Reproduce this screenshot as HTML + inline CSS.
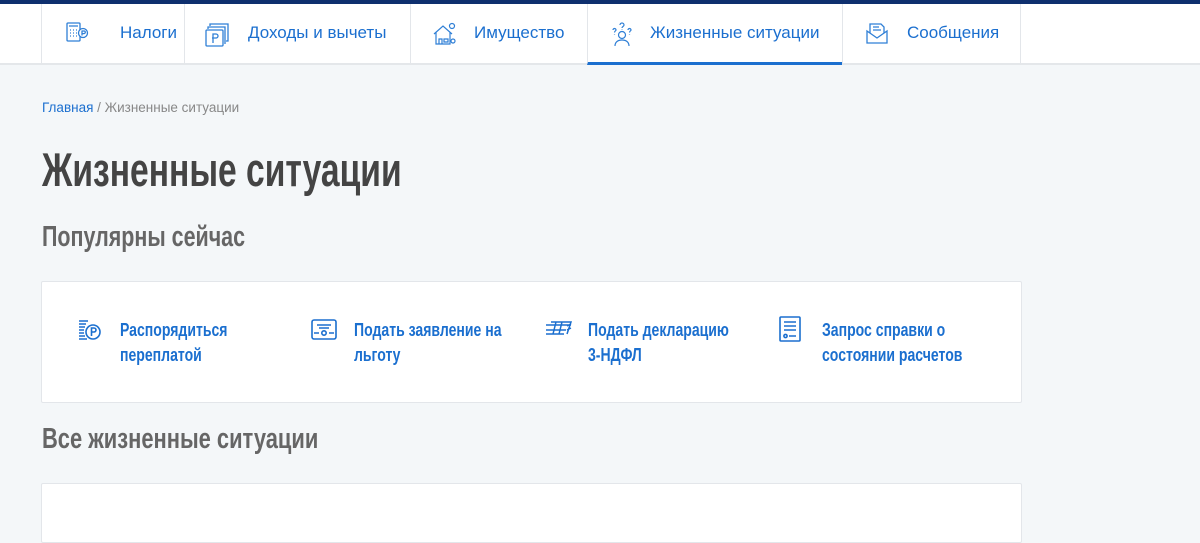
<!DOCTYPE html>
<html><head><meta charset="utf-8"><style>
*{margin:0;padding:0;box-sizing:border-box}
body{width:1200px;height:514px;overflow:hidden;background:#f4f7f9;font-family:"Liberation Sans",sans-serif;position:relative}
.top{position:absolute;left:0;top:0;width:1200px;height:4px;background:#0e2f6e}
.nav{position:absolute;left:0;top:4px;width:1200px;height:61px;background:#fff;border-bottom:2px solid #e4e7ea}
.it{position:absolute;top:0;height:59px;border-left:1px solid #e3e6ea;color:#1b6fcf;font-size:17px;line-height:58px}
.it svg{position:absolute;top:18px}
.it span{position:absolute;top:0}
.act{border-bottom:3px solid #1b6fcf;height:61px}
.c{display:inline-block;transform-origin:0 0;font-weight:bold;white-space:nowrap}
.bc{position:absolute;left:42px;top:100px;font-size:13.5px;color:#888}
.bc a{color:#1b6fcf;text-decoration:none}
h1{position:absolute;left:42px;top:142px;font-size:47px;color:#444;font-weight:bold}
h2{position:absolute;font-size:29px;color:#666;font-weight:bold}
.card{position:absolute;left:41px;width:981px;background:#fff;border:1px solid #e3e6ea;border-radius:2px}
.l{position:absolute;color:#1b6fcf;font-size:18px;line-height:25px;font-weight:bold}
.l .c{transform:scaleX(.78)}
.ic{position:absolute}
</style></head><body>
<div class="top"></div>
<div class="nav">
<div class="it" style="left:41px;width:143px"><svg style="left:24px" width="24" height="22" viewBox="0 0 24 22" fill="none" stroke="#2f7fd6" stroke-width="1.3"><rect x="1" y="1" width="13" height="18" rx="1"/><path d="M3 4h9M4 8h1M7 8h1M10 8h1M4 11h1M7 11h1M10 11h1M4 14h1M7 14h1M10 14h1"/><circle cx="17" cy="11" r="4.5" fill="#fff"/><path d="M16 8.5v5M16 9h2a1.3 1.3 0 010 2.6h-2.5"/></svg><span style="left:78px">Налоги</span></div>
<div class="it" style="left:184px;width:226px"><svg style="left:20px" width="26" height="26" viewBox="0 0 26 26" fill="none" stroke="#2f7fd6" stroke-width="1.3"><path d="M5 4V2h18v17h-2M3 7V5h17v17"/><rect x="1" y="8" width="17" height="16" rx="1"/><path d="M8 21v-9h3a2 2 0 010 4H7"/></svg><span style="left:63px">Доходы и вычеты</span></div>
<div class="it" style="left:410px;width:177px"><svg style="left:21px" width="26" height="24" viewBox="0 0 26 24" fill="none" stroke="#2f7fd6" stroke-width="1.2"><path d="M2 12L11 4l9 8M4 10v12h14V10M7 22v-5h3v5M12 17h4v3h-4z"/><circle cx="20" cy="4" r="2.5"/><circle cx="21" cy="19" r="2"/></svg><span style="left:63px">Имущество</span></div>
<div class="it act" style="left:587px;width:255px"><svg style="left:22px" width="24" height="26" viewBox="0 0 24 26" fill="none" stroke="#2f7fd6" stroke-width="1.2"><circle cx="12" cy="13" r="3.5"/><path d="M5 24c0-4 3-6 7-6s7 2 7 6M10 3a2 2 0 114 0c0 1.5-2 1.5-2 3M3 8a1.5 1.5 0 113 0c0 1-1.5 1-1.5 2.5M18 8a1.5 1.5 0 113 0c0 1-1.5 1-1.5 2.5M12 7.5v.5M4.5 12.5v.5M19.5 12.5v.5"/></svg><span style="left:62px">Жизненные ситуации</span></div>
<div class="it" style="left:842px;width:179px;border-right:1px solid #e3e6ea"><svg style="left:23px" width="22" height="22" viewBox="0 0 22 22" fill="none" stroke="#2f7fd6" stroke-width="1.3"><path d="M1 9l10 7 10-7v12H1z"/><path d="M4 11V2h11l3 3v6M7 5h6M7 8h8"/></svg><span style="left:64px">Сообщения</span></div>
</div>
<div class="bc"><a>Главная</a> / Жизненные ситуации</div>
<h1><span class="c" style="transform:scaleX(.715)">Жизненные ситуации</span></h1>
<h2 style="left:42px;top:221px"><span class="c" style="transform:scaleX(.74)">Популярны сейчас</span></h2>
<div class="card" style="top:281px;height:122px"></div>
<svg class="ic" style="left:78px;top:319px" width="24" height="24" viewBox="0 0 24 24" fill="none" stroke="#1b6fcf" stroke-width="1.6"><path d="M1 2h9M1 5h7M1 8h6M1 11h5M1 14h5M1 17h6M1 20h8"/><circle cx="15" cy="13" r="7"/><path d="M13.5 17v-8h2.5a2 2 0 010 4h-2.5"/></svg>
<div class="l" style="left:120px;top:318px"><span class="c">Распорядиться<br>переплатой</span></div>
<svg class="ic" style="left:311px;top:319px" width="26" height="22" viewBox="0 0 26 22" fill="none" stroke="#1b6fcf" stroke-width="1.6"><rect x="1" y="1" width="24" height="19" rx="2"/><path d="M6 6h14M8 9h10M3 14h5M18 14h5"/><circle cx="13" cy="14" r="2.2"/></svg>
<div class="l" style="left:354px;top:318px"><span class="c">Подать заявление на<br>льготу</span></div>
<svg class="ic" style="left:545px;top:320px" width="27" height="16" viewBox="0 0 27 16" fill="none" stroke="#1b6fcf" stroke-width="1.5"><path d="M1 5h25M1 10h20M1 14h18M6 2h20l-4 12M11 2l-3 12M17 2l-3 12M22 6l4-2M22 10l4-2"/></svg>
<div class="l" style="left:588px;top:318px"><span class="c">Подать декларацию<br>3-НДФЛ</span></div>
<svg class="ic" style="left:779px;top:316px" width="22" height="26" viewBox="0 0 22 26" fill="none" stroke="#1b6fcf" stroke-width="1.6"><rect x="1" y="1" width="20" height="24" rx="1"/><path d="M5 6h12M5 10h12M5 14h12M10 20h7"/><circle cx="6.5" cy="20" r="1.6"/></svg>
<div class="l" style="left:822px;top:318px"><span class="c">Запрос справки о<br>состоянии расчетов</span></div>
<h2 style="left:42px;top:423px"><span class="c" style="transform:scaleX(.755)">Все жизненные ситуации</span></h2>
<div class="card" style="top:483px;height:60px"></div>
</body></html>
